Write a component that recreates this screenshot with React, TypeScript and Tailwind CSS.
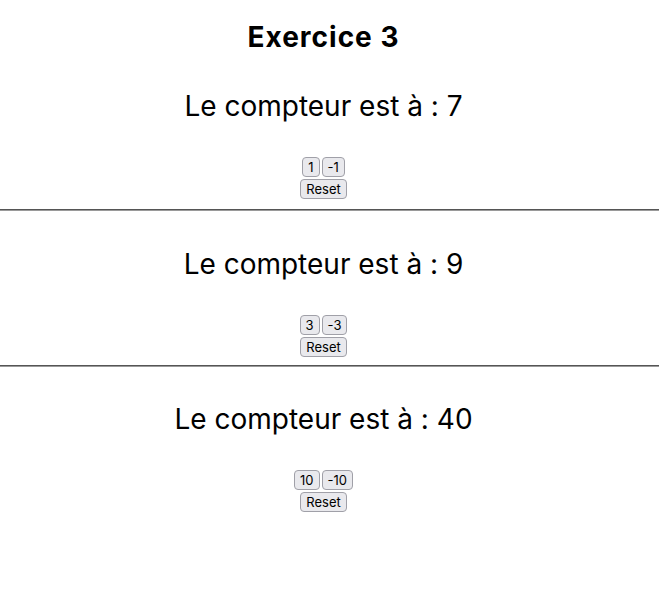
import React, { useState } from 'react';

function Counter({ step, initial, first }: { step: number; initial: number; first?: boolean }) {
  const [count, setCount] = useState(initial);
  const btn =
    'h-[20px] px-[5px] text-[13px] leading-none text-black bg-[#e9e9ed] border border-[#a0a0a8] rounded-[4px]';

  return (
    <div className="flex flex-col items-center">
      <h2 className={`${first ? 'mt-[37px]' : 'mt-[36px]'} text-[28px] leading-[34px] font-normal`}>
        Le compteur est à : {count}
      </h2>
      <div className="mt-[34px] flex gap-[2px]">
        <button className={btn} onClick={() => setCount(count + step)}>{step}</button>
        <button className={btn} onClick={() => setCount(count - step)}>-{step}</button>
      </div>
      <button className={`${btn} mt-[2px]`} onClick={() => setCount(initial)}>Reset</button>
    </div>
  );
}

export default function App() {
  return (
    <div className="min-h-screen bg-white text-black pr-[12px] font-['Inter','Noto_Sans',sans-serif] [font-feature-settings:'calt'_0]">
      <h1 className="pt-[22px] text-center text-[28px] leading-[30px] font-bold tracking-[1px]">Exercice 3</h1>
      <Counter step={1} initial={7} first />
      <hr className="mt-[10px] -mr-[12px] border-t border-t-[#555] border-b border-b-[#9a9a9a]" />
      <Counter step={3} initial={9} />
      <hr className="mt-[8px] -mr-[12px] border-t border-t-[#555] border-b border-b-[#9a9a9a]" />
      <div className="-mt-[1px]">
        <Counter step={10} initial={40} />
      </div>
    </div>
  );
}
